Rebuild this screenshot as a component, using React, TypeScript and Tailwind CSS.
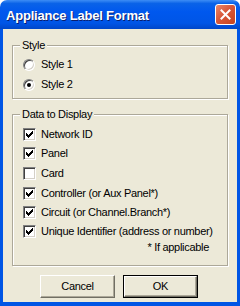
import React from "react";

const font = "font-['Liberation_Sans',Arial,sans-serif]";

function Radio({ checked }: { checked?: boolean }) {
  return (
    <div className="relative w-[12px] h-[12px] rounded-full bg-white border border-t-[#808080] border-l-[#808080] border-b-white border-r-white shadow-[inset_1px_1px_0_#404040,inset_-1px_-1px_0_#d4d0c8] flex items-center justify-center">
      {checked && <div className="w-[4px] h-[4px] rounded-full bg-black" />}
    </div>
  );
}

function Check({ checked }: { checked?: boolean }) {
  return (
    <div className="relative w-[13px] h-[13px] bg-white border border-t-[#808080] border-l-[#808080] border-b-white border-r-white shadow-[inset_1px_1px_0_#404040,inset_-1px_-1px_0_#d4d0c8]">
      {checked && (
        <svg width="13" height="13" viewBox="0 0 13 13" className="absolute -left-[1px] -top-[1px]" shapeRendering="crispEdges">
          <g fill="#000">
            <rect x="9" y="3" width="1" height="1" />
            <rect x="8" y="4" width="2" height="1" />
            <rect x="3" y="5" width="1" height="1" />
            <rect x="7" y="5" width="3" height="1" />
            <rect x="3" y="6" width="2" height="1" />
            <rect x="6" y="6" width="3" height="1" />
            <rect x="3" y="7" width="5" height="1" />
            <rect x="4" y="8" width="3" height="1" />
            <rect x="5" y="9" width="1" height="1" />
          </g>
        </svg>
      )}
    </div>
  );
}

function Row({ children, text, className = "" }: { children: React.ReactNode; text: string; className?: string }) {
  return (
    <div className={`flex items-center h-[13px] ${className}`}>
      <div className="w-[13px] flex justify-start">{children}</div>
      <span className="ml-[5px] leading-[13px] text-[11px] tracking-[-0.3px] text-black whitespace-nowrap">{text}</span>
    </div>
  );
}

function Group({ title, className = "", children }: { title: string; className?: string; children: React.ReactNode }) {
  return (
    <div className={`relative border border-[#aca899] shadow-[inset_1px_1px_0_#fff,1px_1px_0_#fff] ${className}`}>
      <span className="absolute left-[7px] -top-[7px] px-[2px] bg-[#ece9d8] text-[11px] leading-[13px] tracking-[-0.3px] text-black">
        {title}
      </span>
      {children}
    </div>
  );
}

export default function App() {
  return (
    <div className={`w-[240px] h-[306px] flex flex-col ${font} select-none`}>
      {/* Title bar */}
      <div className="h-[29px] rounded-t-[7px] bg-[linear-gradient(to_bottom,#3d8df5_0%,#0a63e8_12%,#0058ee_40%,#0055e6_80%,#0046c8_100%)] flex items-center pl-[6px] pr-[3px] shrink-0">
        <span className="text-white font-bold text-[13px] tracking-[-0.2px] [text-shadow:1px_1px_0_#0a1e6e] flex-1 leading-none mt-[1px]">
          Appliance Label Format
        </span>
        <div className="w-[21px] h-[21px] mr-[1px] rounded-[3px] border border-white bg-[linear-gradient(135deg,#e9886b_0%,#d8583a_45%,#c5431f_100%)] flex items-center justify-center">
          <svg width="13" height="13" viewBox="0 0 13 13">
            <path d="M2.5 2.5 L10.5 10.5 M10.5 2.5 L2.5 10.5" stroke="#fff" strokeWidth="2" strokeLinecap="square" />
          </svg>
        </div>
      </div>
      {/* Body */}
      <div className="flex-1 bg-[#ece9d8] border-l-[3px] border-r-[3px] border-b-[4px] border-[#0055e5] px-[9px] pt-[16px] flex flex-col">
        <Group title="Style" className="h-[54px] pt-[12px] pl-[10px]">
          <Row text="Style 1"><Radio /></Row>
          <Row text="Style 2" className="mt-[7px]"><Radio checked /></Row>
        </Group>
        <Group title="Data to Display" className="mt-[15px] h-[152px] pt-[13px] pl-[10px]">
          <Row text="Network ID"><Check checked /></Row>
          <Row text="Panel" className="mt-[6px]"><Check checked /></Row>
          <Row text="Card" className="mt-[7px]"><Check /></Row>
          <Row text="Controller (or Aux Panel*)" className="mt-[7px]"><Check checked /></Row>
          <Row text="Circuit (or Channel.Branch*)" className="mt-[6px]"><Check checked /></Row>
          <Row text="Unique Identifier (address or number)" className="mt-[6px]"><Check checked /></Row>
          <div className="mt-[3px] pr-[18px] text-right text-[11px] leading-[13px] tracking-[-0.3px] text-black">* If applicable</div>
        </Group>
        <div className="mt-[9px] flex justify-center gap-[8px] pr-[2px]">
          <button className="w-[75px] h-[23px] bg-[#ece9d8] border border-t-white border-l-white border-b-[#716f64] border-r-[#716f64] shadow-[inset_-1px_-1px_0_#aca899] text-[11px] tracking-[-0.3px] text-black leading-none">
            Cancel
          </button>
          <button className="w-[75px] h-[23px] bg-[#ece9d8] border border-black text-[11px] tracking-[-0.3px] text-black leading-none p-0">
            <div className="w-full h-full border border-t-white border-l-white border-b-[#716f64] border-r-[#716f64] shadow-[inset_-1px_-1px_0_#aca899] flex items-center justify-center">
              OK
            </div>
          </button>
        </div>
      </div>
    </div>
  );
}
